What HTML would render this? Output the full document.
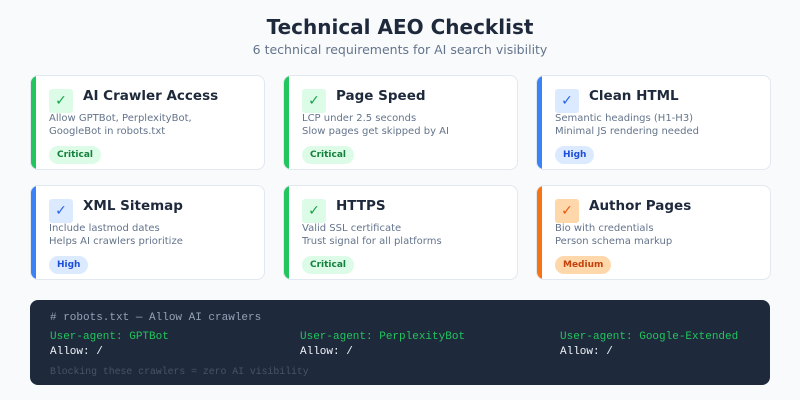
<!DOCTYPE html>
<html><head><meta charset="utf-8"><style>
*{margin:0;padding:0;box-sizing:border-box}
body{width:800px;height:400px;background:#f8fafc;font-family:"DejaVu Sans","Liberation Sans",sans-serif;position:relative;overflow:hidden;color:#1e293b}
.t{position:absolute;left:0;width:800px;text-align:center}
.card{position:absolute;width:235px;height:95px;background:#fff;border:1.5px solid #e2e8f0;border-radius:8px;overflow:hidden}
.bar{position:absolute;left:0;top:0;bottom:0;width:5px}
.ic{position:absolute;left:18px;top:13px;width:24px;height:24px;border-radius:3px;text-align:center;line-height:24px;font-size:14px}
.h{position:absolute;left:52px;top:12px;font-weight:bold;font-size:13.5px}
.d{position:absolute;left:18px;top:36px;font-size:10px;line-height:13px;color:#64748b}
.b{position:absolute;left:18px;top:70px;height:18px;line-height:18px;padding:0 8px;border-radius:9px;font-size:9px;font-weight:bold}
.g .bar{background:#22c55e}.g .ic{background:#dcfce7;color:#16a34a}.g .b{background:#dcfce7;color:#15803d}
.bl .bar{background:#3b82f6}.bl .ic{background:#dbeafe;color:#2563eb}.bl .b{background:#dbeafe;color:#1d4ed8}
.o .bar{background:#f97316}.o .ic{background:#fed7aa;color:#ea580c}.o .b{background:#fed7aa;color:#c2410c}
.code{position:absolute;left:30px;top:300px;width:740px;height:85px;background:#1e293b;border-radius:8px;font-family:"Liberation Mono",monospace;font-size:11px}
.code div{position:absolute;white-space:pre}
</style></head><body>
<div class="t" style="top:15px;font-size:20px;font-weight:bold">Technical AEO Checklist</div>
<div class="t" style="top:42px;font-size:12.5px;color:#64748b">6 technical requirements for AI search visibility</div>

<div class="card g" style="left:30px;top:75px"><div class="bar"></div><div class="ic">✓</div><div class="h">AI Crawler Access</div><div class="d">Allow GPTBot, PerplexityBot,<br>GoogleBot in robots.txt</div><div class="b">Critical</div></div>
<div class="card g" style="left:283px;top:75px"><div class="bar"></div><div class="ic">✓</div><div class="h">Page Speed</div><div class="d">LCP under 2.5 seconds<br>Slow pages get skipped by AI</div><div class="b">Critical</div></div>
<div class="card bl" style="left:536px;top:75px"><div class="bar"></div><div class="ic">✓</div><div class="h">Clean HTML</div><div class="d">Semantic headings (H1-H3)<br>Minimal JS rendering needed</div><div class="b">High</div></div>
<div class="card bl" style="left:30px;top:185px"><div class="bar"></div><div class="ic">✓</div><div class="h">XML Sitemap</div><div class="d">Include lastmod dates<br>Helps AI crawlers prioritize</div><div class="b">High</div></div>
<div class="card g" style="left:283px;top:185px"><div class="bar"></div><div class="ic">✓</div><div class="h">HTTPS</div><div class="d">Valid SSL certificate<br>Trust signal for all platforms</div><div class="b">Critical</div></div>
<div class="card o" style="left:536px;top:185px"><div class="bar"></div><div class="ic">✓</div><div class="h">Author Pages</div><div class="d">Bio with credentials<br>Person schema markup</div><div class="b">Medium</div></div>

<div class="code">
<div style="left:20px;top:12px;color:#94a3b8"># robots.txt — Allow AI crawlers</div>
<div style="left:20px;top:31px;color:#22c55e">User-agent: GPTBot</div>
<div style="left:20px;top:46px;color:#f1f5f9">Allow: /</div>
<div style="left:270px;top:31px;color:#22c55e">User-agent: PerplexityBot</div>
<div style="left:270px;top:46px;color:#f1f5f9">Allow: /</div>
<div style="left:530px;top:31px;color:#22c55e">User-agent: Google-Extended</div>
<div style="left:530px;top:46px;color:#f1f5f9">Allow: /</div>
<div style="left:20px;top:66px;color:#475569;font-size:9.8px">Blocking these crawlers = zero AI visibility</div>
</div>
</body></html>
